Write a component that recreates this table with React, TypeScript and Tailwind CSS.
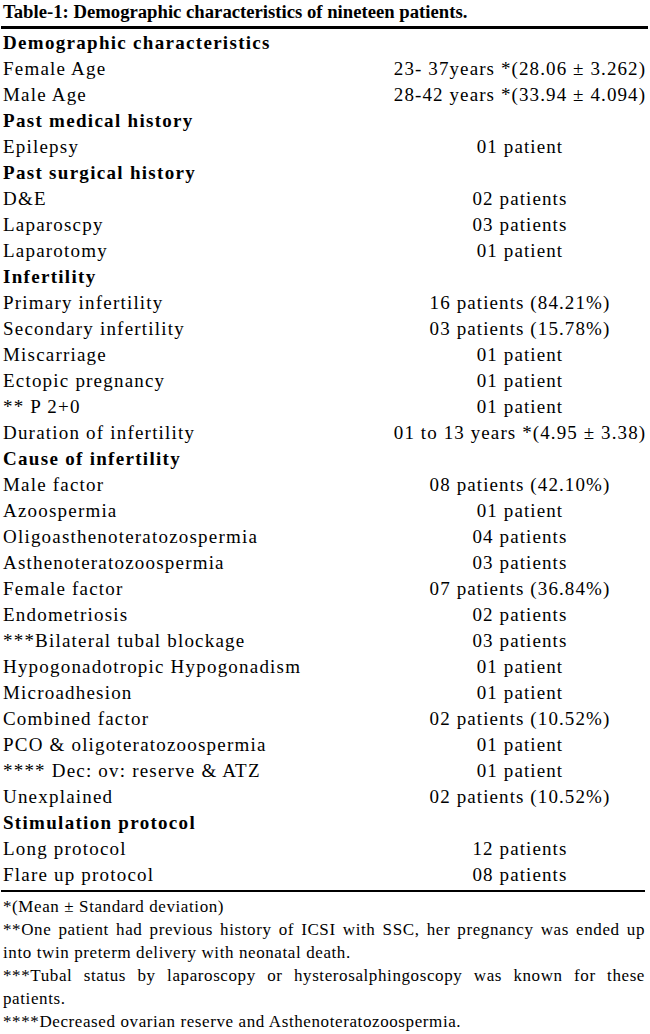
type Row = { label: string; value?: string; head?: boolean };

const rows: Row[] = [
  { label: 'Demographic characteristics', head: true },
  { label: 'Female Age', value: '23- 37years *(28.06 ± 3.262)' },
  { label: 'Male Age', value: '28-42 years *(33.94 ± 4.094)' },
  { label: 'Past medical history', head: true },
  { label: 'Epilepsy', value: '01 patient' },
  { label: 'Past surgical history', head: true },
  { label: 'D&E', value: '02 patients' },
  { label: 'Laparoscpy', value: '03 patients' },
  { label: 'Laparotomy', value: '01 patient' },
  { label: 'Infertility', head: true },
  { label: 'Primary infertility', value: '16 patients (84.21%)' },
  { label: 'Secondary infertility', value: '03 patients (15.78%)' },
  { label: 'Miscarriage', value: '01 patient' },
  { label: 'Ectopic pregnancy', value: '01 patient' },
  { label: '** P 2+0', value: '01 patient' },
  { label: 'Duration of infertility', value: '01 to 13 years *(4.95 ± 3.38)' },
  { label: 'Cause of infertility', head: true },
  { label: 'Male factor', value: '08 patients (42.10%)' },
  { label: 'Azoospermia', value: '01 patient' },
  { label: 'Oligoasthenoteratozospermia', value: '04 patients' },
  { label: 'Asthenoteratozoospermia', value: '03 patients' },
  { label: 'Female factor', value: '07 patients (36.84%)' },
  { label: 'Endometriosis', value: '02 patients' },
  { label: '***Bilateral tubal blockage', value: '03 patients' },
  { label: 'Hypogonadotropic Hypogonadism', value: '01 patient' },
  { label: 'Microadhesion', value: '01 patient' },
  { label: 'Combined factor', value: '02 patients (10.52%)' },
  { label: 'PCO & oligoteratozoospermia', value: '01 patient' },
  { label: '**** Dec: ov: reserve & ATZ', value: '01 patient' },
  { label: 'Unexplained', value: '02 patients (10.52%)' },
  { label: 'Stimulation protocol', head: true },
  { label: 'Long protocol', value: '12 patients' },
  { label: 'Flare up protocol', value: '08 patients' },
];

export default function App() {
  return (
    <div className="w-[650px] h-[1034px] bg-white text-black font-['Liberation_Serif',serif]">
      <div className="pl-[3px] pt-[1px] h-[26px] text-[18.7px] leading-[22px] font-bold whitespace-nowrap">
        Table-1: Demographic characteristics of nineteen patients.
      </div>
      <div className="ml-[1px] mr-[2px] border-t-[3px] border-black" />

      <div className="pl-[3px]">
        {rows.map((r) => (
          <div key={r.label} className="grid grid-cols-[387px_1fr] h-[26px] items-center">
            <div
              className={
                r.head
                  ? 'text-[19px] font-bold tracking-[1.3px] whitespace-nowrap'
                  : 'text-[19px] tracking-[1.2px] whitespace-nowrap'
              }
            >
              {r.label}
            </div>
            <div className="text-[19px] tracking-[1.1px] whitespace-nowrap flex justify-center">
              {r.value}
            </div>
          </div>
        ))}
      </div>

      <div className="mt-[3px] ml-[1px] mr-[5px] border-t-2 border-black" />

      <div className="pl-[3px] pr-[5px] pt-[3px] text-[17px] leading-[23px] tracking-[0.6px]">
        <div>*(Mean ± Standard deviation)</div>
        <div className="[text-align-last:justify]">
          **One patient had previous history of ICSI with SSC, her pregnancy was ended up
        </div>
        <div>into twin preterm delivery with neonatal death.</div>
        <div className="[text-align-last:justify]">
          ***Tubal status by laparoscopy or hysterosalphingoscopy was known for these
        </div>
        <div>patients.</div>
        <div>****Decreased ovarian reserve and Asthenoteratozoospermia.</div>
      </div>
    </div>
  );
}
